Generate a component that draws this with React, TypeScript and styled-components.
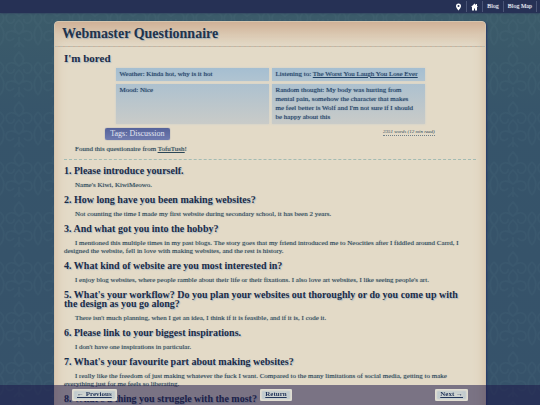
import React from "react";
import styled, { createGlobalStyle } from "styled-components";

const serif = `"Liberation Serif", "Times New Roman", serif`;

const damask = `url("data:image/svg+xml,${encodeURIComponent(
  `<svg xmlns='http://www.w3.org/2000/svg' width='38' height='50' viewBox='0 0 38 50'>
    <g fill='none' stroke='#86b4bb' stroke-opacity='.05' stroke-width='1.6'>
      <path d='M19 2c-5 5-7 9 0 14 7-5 5-9 0-14zM19 16c-9-7-15-1-12 5 3 4 8 2 7-2M19 16c9-7 15-1 12 5-3 4-8 2-7-2M19 20c-6 5-6 10 0 14 6-4 6-9 0-14zM19 34c-6-5-13-3-13 2s6 6 8 2M19 34c6-5 13-3 13 2s-6 6-8 2M19 37v10M0 25c5-4 5-9 0-13M38 25c-5-4-5-9 0-13M0 25c5 5 5 14 0 20M38 25c-5 5-5 14 0 20M14 47l5-5 5 5'/>
    </g>
  </svg>`
)}")`;

const GlobalStyle = createGlobalStyle`
  *, *::before, *::after { box-sizing: border-box; }
  html { scrollbar-width: none; }
  body {
    margin: 0;
    font-family: ${serif};
    font-size: 7px;
    line-height: 9px;
    color: #2b4656;
    background: ${damask}, linear-gradient(#3c5c6a, #36546a 30%, #36526a);
    background-attachment: fixed;
  }
  a { color: inherit; }
  h1, h2, h3, p, dl, dd { margin: 0; padding: 0; }
`;

const TopNav = styled.nav`
  position: sticky;
  top: 0;
  z-index: 2;
  display: flex;
  justify-content: flex-end;
  height: 13px;
  padding-right: 3px;
  background: #263155;
  box-shadow: 0 0 2px #263155;
`;

const NavLink = styled.a`
  display: flex;
  align-items: center;
  margin: 1px 0;
  padding: 0 4px;
  border-right: 1px solid #4b5677;
  color: #f0f2f8;
  font-size: 6px;
  text-shadow: 0 0 1px #aab2c8;
  text-decoration: none;
`;

const NavIcon = styled.svg`
  width: 7px;
  height: 8px;
  fill: #fff;
`;

const Card = styled.main`
  width: 80%;
  margin: 8px auto 0;
  border: 1px solid #d5c5ae;
  border-radius: 4px;
  background: #e3dac7;
  box-shadow: inset 0 0 12px #d6bb9f, 1px 1px 2px #253768;
`;

const CardHeader = styled.header`
  padding: 4px 7px;
  border-bottom: 1px dashed #bcbcb0;
  border-radius: 3px 3px 0 0;
  background: linear-gradient(#d0b197, #dac7b0 50%, transparent);
`;

const Title = styled.h1`
  font-size: 14px;
  line-height: 16px;
  color: #22334a;
  text-shadow: 1px 1px 1px #9fb0bb;
`;

const Content = styled.div`
  padding: 5px 9px 24px;
`;

const Heading = styled.h2`
  font-size: 11px;
  line-height: 12px;
  color: #1c2c46;
  text-shadow: 1px 1px 1px #a9bac4;
`;

const InfoGrid = styled.dl`
  display: grid;
  grid-template-columns: 1fr 1fr;
  gap: 3px;
  width: 75%;
  margin: 4px auto;
`;

const InfoCell = styled.div`
  padding: 2px 4px;
  background: ${(p: { $tall?: boolean }) =>
    p.$tall ? "linear-gradient(#adc1cf, #c9cbc8)" : "linear-gradient(#a5bed1, #b0c4d1)"};
  box-shadow: 0 0 2px #c7cecd;
  color: #1f4064;
  text-shadow: 0 0 1px #4a6a8c;
  dt, dd { display: inline; }
`;

const MetaRow = styled.div`
  display: flex;
  justify-content: space-between;
  align-items: flex-start;
  width: 80%;
  margin: 0 auto 5px;
`;

const Tag = styled.span`
  padding: 0 5px;
  border-radius: 2px;
  background: linear-gradient(#56639a, #6f7bb0);
  box-shadow: 0 0 1px #56639a;
  color: #e3e6f2;
  font-size: 8px;
  line-height: 12px;
`;

const WordCount = styled.small`
  margin-top: 1px;
  border-bottom: 1px dotted #70808a;
  font-size: 5px;
  font-style: italic;
  line-height: 6px;
`;

const Paragraph = styled.p`
  text-indent: 11px;
  line-height: 8px;
  text-shadow: 0 0 1px #7b8b93;
`;

const Divider = styled.hr`
  margin: 6px 0;
  border: 0;
  border-top: 1px dashed #a3bbb3;
`;

const Question = styled.section`
  margin-bottom: 6px;
`;

const QuestionTitle = styled.h3`
  margin-bottom: 6px;
  padding-right: 8px;
  font-size: 10px;
  line-height: 9px;
  color: #1c2c46;
  text-shadow: 1px 1px 1px #a9bac4;
`;

const Pager = styled.nav`
  position: fixed;
  inset: auto 0 0;
  display: flex;
  justify-content: space-between;
  align-items: center;
  height: 20px;
  padding: 0 72px;
  background: rgba(29, 22, 72, 0.53);
`;

const PagerLink = styled.a`
  padding: 1px 5px 2px;
  border-radius: 2px;
  background: #e3dfd2;
  box-shadow: inset 0 0 2px 2px #e3dfd2, inset 0 0 4px 4px #b4c4ce;
  color: #22355a;
  font-weight: bold;
`;

const questions: [string, string][] = [
  ["Please introduce yourself.", "Name's Kiwi, KiwiMeowo."],
  ["How long have you been making websites?", "Not counting the time I made my first website during secondary school, it has been 2 years."],
  ["And what got you into the hobby?", "I mentioned this multiple times in my past blogs. The story goes that my friend introduced me to Neocities after I fiddled around Carrd, I designed the website, fell in love with making websites, and the rest is history."],
  ["What kind of website are you most interested in?", "I enjoy blog websites, where people ramble about their life or their fixations. I also love art websites, I like seeing people's art."],
  ["What's your workflow? Do you plan your websites out thoroughly or do you come up with the design as you go along?", "There isn't much planning, when I get an idea, I think if it is feasible, and if it is, I code it."],
  ["Please link to your biggest inspirations.", "I don't have one inspirations in particular."],
  ["What's your favourite part about making websites?", "I really like the freedom of just making whatever the fuck I want. Compared to the many limitations of social media, getting to make everything just for me feels so liberating."],
  ["What's a thing you struggle with the most?", ""],
];

export default function App() {
  return (
    <>
      <GlobalStyle />
      <TopNav aria-label="Site">
        <NavLink href="#map" aria-label="Site map">
          <NavIcon viewBox="0 0 14 16"><path fillRule="evenodd" d="M7 1a5 5 0 0 0-5 5c0 4 5 9 5 9s5-5 5-9a5 5 0 0 0-5-5zm0 3a2 2 0 1 1 0 4 2 2 0 0 1 0-4z" /></NavIcon>
        </NavLink>
        <NavLink href="#home" aria-label="Home">
          <NavIcon viewBox="0 0 14 16"><path d="M7 1 0 8h2v7h4v-4h2v4h4V8h2l-2-2V2h-2v2z" /></NavIcon>
        </NavLink>
        <NavLink href="#blog">Blog</NavLink>
        <NavLink href="#blog-map">Blog Map</NavLink>
      </TopNav>
      <Card>
        <CardHeader><Title>Webmaster Questionnaire</Title></CardHeader>
        <Content>
          <Heading>I'm bored</Heading>
          <InfoGrid>
            <InfoCell><dt>Weather:</dt> <dd>Kinda hot, why is it hot</dd></InfoCell>
            <InfoCell><dt>Listening to:</dt> <dd><a href="#listening">The Worst You Laugh You Lose Ever</a></dd></InfoCell>
            <InfoCell $tall><dt>Mood:</dt> <dd>Nice</dd></InfoCell>
            <InfoCell $tall>
              <dt>Random thought:</dt>{" "}
              <dd>
                My body was hurting from mental pain, somehow the character that makes
                <br />
                me feel better is Wolf and I'm not sure if I should be happy about this
              </dd>
            </InfoCell>
          </InfoGrid>
          <MetaRow>
            <Tag>Tags: Discussion</Tag>
            <WordCount>2351 words (12 min read)</WordCount>
          </MetaRow>
          <Paragraph>Found this questionaire from <a href="#tofutush">TofuTush</a>!</Paragraph>
          <Divider />
          {questions.map(([title, answer], i) => (
            <Question key={title}>
              <QuestionTitle>{i + 1}. {title}</QuestionTitle>
              {answer && <Paragraph>{answer}</Paragraph>}
            </Question>
          ))}
        </Content>
      </Card>
      <Pager aria-label="Entries">
        <PagerLink href="#previous">← Previous</PagerLink>
        <PagerLink href="#return">Return</PagerLink>
        <PagerLink href="#next">Next →</PagerLink>
      </Pager>
    </>
  );
}
